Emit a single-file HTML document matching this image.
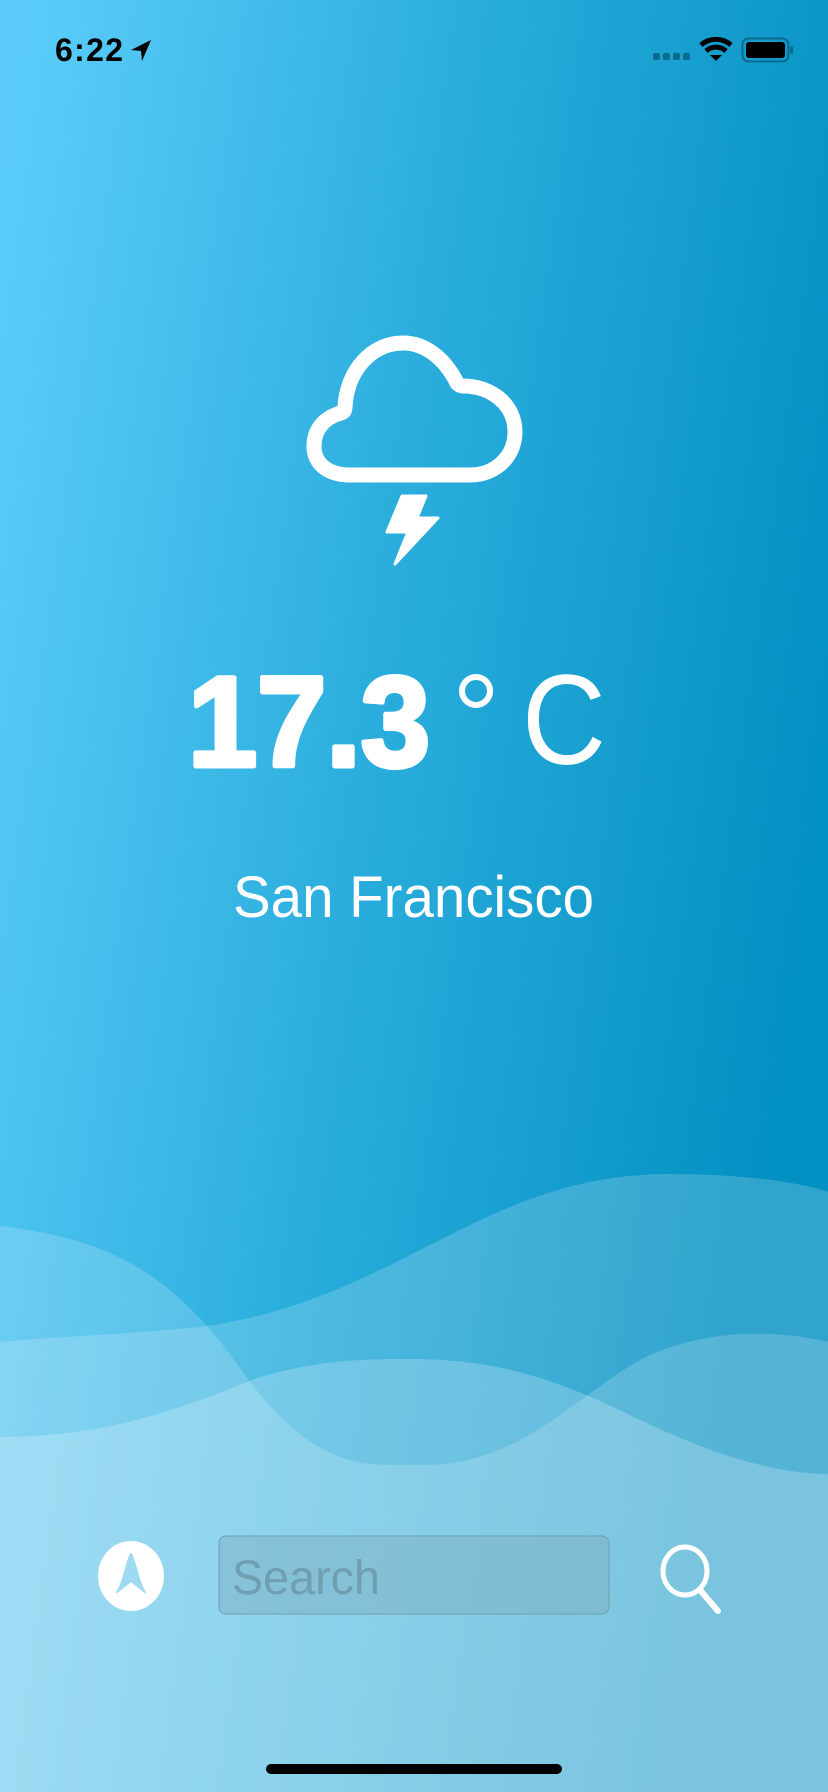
<!DOCTYPE html>
<html><head><meta charset="utf-8"><style>
html,body{margin:0;padding:0}
body{width:828px;height:1792px;overflow:hidden;position:relative;background:#2aaddc}
svg{position:absolute;left:0;top:0}
</style></head><body>
<svg width="828" height="1792" viewBox="0 0 828 1792" xmlns="http://www.w3.org/2000/svg">
<defs>
<linearGradient id="bg" x1="0" y1="0.1" x2="1" y2="0.4">
<stop offset="0" stop-color="#5ccdfa"/><stop offset="0.5" stop-color="#2aaddc"/><stop offset="1" stop-color="#0390c2"/>
</linearGradient>
</defs>
<rect width="828" height="1792" fill="url(#bg)"/>
<path d="M0 1342 C60 1336 120 1335 200 1327 C400 1300 480 1174 670 1174 C740 1174 800 1182 828 1192 L828 1792 L0 1792 Z" fill="#ffffff" fill-opacity="0.18"/>
<path d="M0 1226 C120 1240 180 1280 250 1382 C320 1470 360 1465 422 1465 C520 1465 570 1400 640 1360 C690 1334 760 1326 828 1342 L828 1792 L0 1792 Z" fill="#ffffff" fill-opacity="0.18"/>
<path d="M0 1437 C120 1437 200 1400 260 1377 C320 1360 360 1359 408 1359 C500 1359 560 1380 640 1420 C720 1458 780 1474 828 1474 L828 1792 L0 1792 Z" fill="#ffffff" fill-opacity="0.22"/>
<text x="55" y="61" font-family="Liberation Sans, sans-serif" font-size="32" font-weight="bold" fill="#000" textLength="68">6:22</text>
<path d="M151 40 L131 50 L141 51 L142 61 Z" fill="#000"/>
<g fill="#0b6b8e"><rect x="653" y="53" width="7" height="7" rx="2"/><rect x="663" y="53" width="7" height="7" rx="2"/><rect x="673" y="53" width="7" height="7" rx="2"/><rect x="683" y="53" width="7" height="7" rx="2"/></g>
<path d="M701 45 A23 23 0 0 1 731 45" stroke="#000" stroke-width="5" fill="none"/>
<path d="M706 51 A15 15 0 0 1 726 51" stroke="#000" stroke-width="5" fill="none"/>
<path d="M710 55 L716 61 L722 55 Z" fill="#000"/>
<rect x="742.5" y="38.5" width="46" height="23" rx="6" fill="none" stroke="#0b6b8e" stroke-width="2"/>
<rect x="746" y="42" width="39" height="16" rx="3" fill="#000"/>
<rect x="790" y="46" width="3" height="8" rx="1.5" fill="#0b6b8e"/>
<path d="M345 407 C347 370 372 343 403 343 C425 343 444 358 456 381 C457 384 460 386 463 386 C492 386 515 405 515 432 C515 456 496 475 470 475 L350 475 C327 475 314 463 314 446 C314 428 326 417 341 413 C344 412 345 410 345 407 Z" fill="none" stroke="#fff" stroke-width="15" stroke-linejoin="round"/>
<path d="M402 496 L426 496 L417 518 L438 518 L395 564 L408 532 L387 532 Z" fill="#fff" stroke="#fff" stroke-width="3" stroke-linejoin="round"/>
<text x="188" y="766" font-family="Liberation Sans, sans-serif" font-size="128" font-weight="bold" fill="#fff" stroke="#fff" stroke-width="5" stroke-linejoin="round" textLength="242" lengthAdjust="spacingAndGlyphs">17.3</text>
<circle cx="476" cy="691" r="14" fill="none" stroke="#fff" stroke-width="6"/>
<text x="522" y="764" font-family="Liberation Sans, sans-serif" font-size="128" fill="#fff" textLength="84" lengthAdjust="spacingAndGlyphs">C</text>
<text x="233" y="917" font-family="Liberation Sans, sans-serif" font-size="58" fill="#fff" textLength="361" lengthAdjust="spacingAndGlyphs">San Francisco</text>
<ellipse cx="131" cy="1576" rx="33" ry="35" fill="#fff"/>
<path d="M131 1554 C127 1560 123 1585 117 1592 L131 1581 L145 1592 C139 1585 135 1560 131 1554 Z" fill="#9edbf3" stroke="#9edbf3" stroke-width="2" stroke-linejoin="round"/>
<rect x="219" y="1536" width="390" height="78" rx="7" fill="#7fb2c6" fill-opacity="0.55" stroke="#6e9fb2" stroke-width="1"/>
<text x="232" y="1594" font-family="Liberation Sans, sans-serif" font-size="48" fill="#6f9fb1" textLength="148" lengthAdjust="spacingAndGlyphs">Search</text>
<ellipse cx="685" cy="1571" rx="22" ry="24" fill="none" stroke="#fff" stroke-width="5"/>
<path d="M700 1590 L718 1611" stroke="#fff" stroke-width="6" stroke-linecap="round"/>
<rect x="266" y="1764" width="296" height="10" rx="5" fill="#000"/>
</svg>
</body></html>
